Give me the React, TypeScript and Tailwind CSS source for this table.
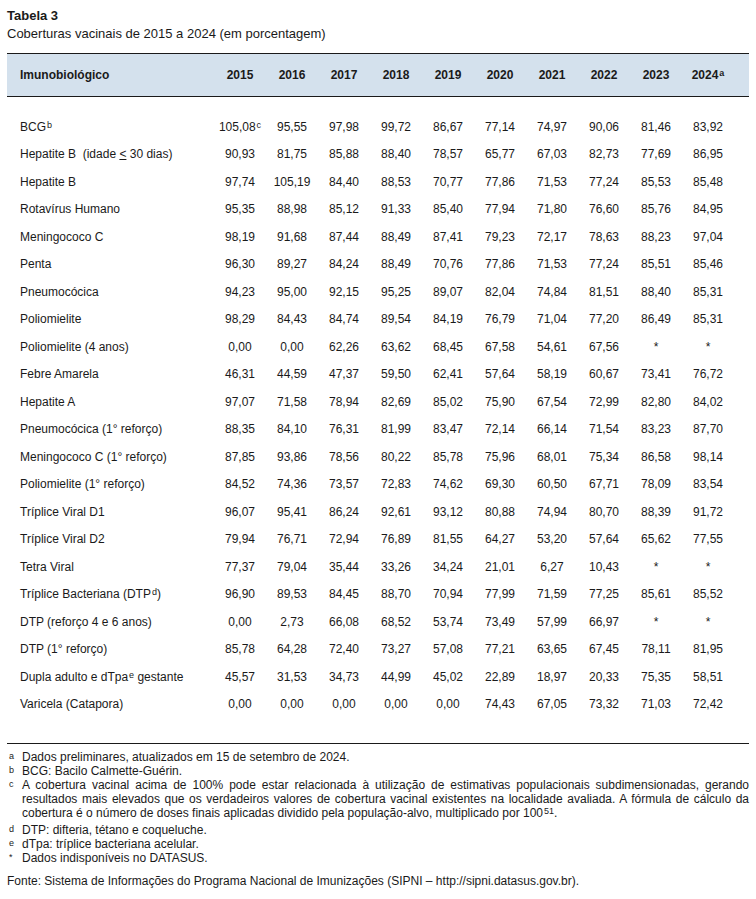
type Row = { label: React.ReactNode; values: React.ReactNode[] };

const years = ["2015", "2016", "2017", "2018", "2019", "2020", "2021", "2022", "2023"];

const sup = (t: string) => <span className="relative -top-[3px] ml-px text-[9px] leading-none">{t}</span>;

const plain = (label: React.ReactNode, s: string): Row => ({ label, values: s.split(" ") });

const rows: Row[] = [
  {
    label: <>BCG{sup("b")}</>,
    values: [<>105,08{sup("c")}</>, ..."95,55 97,98 99,72 86,67 77,14 74,97 90,06 81,46 83,92".split(" ")],
  },
  plain(<>Hepatite B&nbsp; (idade <span className="underline">&lt;</span> 30 dias)</>, "90,93 81,75 85,88 88,40 78,57 65,77 67,03 82,73 77,69 86,95"),
  plain("Hepatite B", "97,74 105,19 84,40 88,53 70,77 77,86 71,53 77,24 85,53 85,48"),
  plain("Rotavírus Humano", "95,35 88,98 85,12 91,33 85,40 77,94 71,80 76,60 85,76 84,95"),
  plain("Meningococo C", "98,19 91,68 87,44 88,49 87,41 79,23 72,17 78,63 88,23 97,04"),
  plain("Penta", "96,30 89,27 84,24 88,49 70,76 77,86 71,53 77,24 85,51 85,46"),
  plain("Pneumocócica", "94,23 95,00 92,15 95,25 89,07 82,04 74,84 81,51 88,40 85,31"),
  plain("Poliomielite", "98,29 84,43 84,74 89,54 84,19 76,79 71,04 77,20 86,49 85,31"),
  plain("Poliomielite (4 anos)", "0,00 0,00 62,26 63,62 68,45 67,58 54,61 67,56 * *"),
  plain("Febre Amarela", "46,31 44,59 47,37 59,50 62,41 57,64 58,19 60,67 73,41 76,72"),
  plain("Hepatite A", "97,07 71,58 78,94 82,69 85,02 75,90 67,54 72,99 82,80 84,02"),
  plain("Pneumocócica (1° reforço)", "88,35 84,10 76,31 81,99 83,47 72,14 66,14 71,54 83,23 87,70"),
  plain("Meningococo C (1° reforço)", "87,85 93,86 78,56 80,22 85,78 75,96 68,01 75,34 86,58 98,14"),
  plain("Poliomielite (1° reforço)", "84,52 74,36 73,57 72,83 74,62 69,30 60,50 67,71 78,09 83,54"),
  plain("Tríplice Viral D1", "96,07 95,41 86,24 92,61 93,12 80,88 74,94 80,70 88,39 91,72"),
  plain("Tríplice Viral D2", "79,94 76,71 72,94 76,89 81,55 64,27 53,20 57,64 65,62 77,55"),
  plain("Tetra Viral", "77,37 79,04 35,44 33,26 34,24 21,01 6,27 10,43 * *"),
  plain(<>Tríplice Bacteriana (DTP{sup("d")})</>, "96,90 89,53 84,45 88,70 70,94 77,99 71,59 77,25 85,61 85,52"),
  plain("DTP (reforço 4 e 6 anos)", "0,00 2,73 66,08 68,52 53,74 73,49 57,99 66,97 * *"),
  plain("DTP (1° reforço)", "85,78 64,28 72,40 73,27 57,08 77,21 63,65 67,45 78,11 81,95"),
  plain(<>Dupla adulto e dTpa{sup("e")} gestante</>, "45,57 31,53 34,73 44,99 45,02 22,89 18,97 20,33 75,35 58,51"),
  plain("Varicela (Catapora)", "0,00 0,00 0,00 0,00 0,00 74,43 67,05 73,32 71,03 72,42"),
];

function Note({ mark, children, justify }: { mark: string; children: React.ReactNode; justify?: boolean }) {
  return (
    <div className="flex">
      <span className="w-[15px] shrink-0 pl-[2px] text-[9px] leading-[12px]">{mark}</span>
      <p className={justify ? "mb-[3px] flex-1 text-justify" : "flex-1"}>{children}</p>
    </div>
  );
}

export default function App() {
  return (
    <div
      className="h-[899px] w-[756px] bg-white px-[7px] pt-[7px] text-[#1a1a1a]"
      style={{ fontFamily: '"Liberation Sans", Arial, sans-serif' }}
    >
      <h1 className="text-[13px] leading-[17px] font-bold">Tabela 3</h1>
      <p className="text-[13px] leading-[19px]">Coberturas vacinais de 2015 a 2024 (em porcentagem)</p>

      <div className="mt-[10px] border-t-[1.5px] border-[#1a1a1a]">
        {/* Header */}
        <div className="grid h-[42px] grid-cols-[207px_repeat(10,52px)] items-center bg-[#d4e1ed] text-[12px] font-bold">
          <span className="pl-[13px]">Imunobiológico</span>
          {years.map((y) => (
            <span key={y} className="text-center">{y}</span>
          ))}
          <span className="text-center">2024{sup("a")}</span>
        </div>

        {/* Body */}
        <div className="border-t-[1.5px] border-[#1a1a1a] pt-[16px] pb-[25px] text-[12px]">
          {rows.map((r, i) => (
            <div key={i} className="grid h-[27.5px] grid-cols-[207px_repeat(10,52px)] items-center">
              <span className="pl-[13px] whitespace-nowrap">{r.label}</span>
              {r.values.map((v, j) => (
                <span key={j} className="text-center whitespace-nowrap">{v}</span>
              ))}
            </div>
          ))}
        </div>
      </div>

      {/* Footnotes */}
      <div className="border-t-[1.5px] border-[#1a1a1a] pt-[6px] text-[12px] leading-[14px]">
        <Note mark="a">Dados preliminares, atualizados em 15 de setembro de 2024.</Note>
        <Note mark="b">BCG: Bacilo Calmette-Guérin.</Note>
        <Note mark="c" justify>
          A cobertura vacinal acima de 100% pode estar relacionada à utilização de estimativas populacionais subdimensionadas, gerando
          resultados mais elevados que os verdadeiros valores de cobertura vacinal existentes na localidade avaliada. A fórmula de cálculo da
          cobertura é o número de doses finais aplicadas dividido pela população-alvo, multiplicado por 100{sup("51")}.
        </Note>
        <Note mark="d">DTP: difteria, tétano e coqueluche.</Note>
        <Note mark="e">dTpa: tríplice bacteriana acelular.</Note>
        <Note mark="*">Dados indisponíveis no DATASUS.</Note>
        <p className="mt-[9px]">Fonte: Sistema de Informações do Programa Nacional de Imunizações (SIPNI – http://sipni.datasus.gov.br).</p>
      </div>
    </div>
  );
}
